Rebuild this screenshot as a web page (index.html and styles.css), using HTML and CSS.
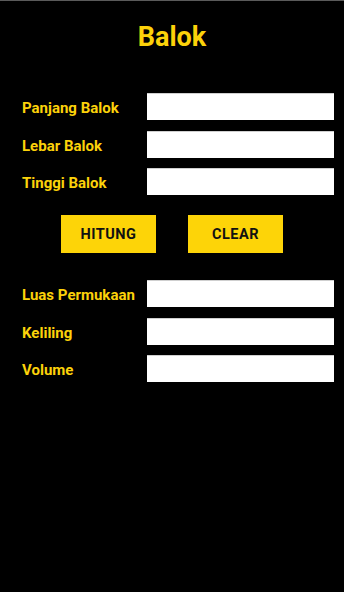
FILE: index.html
```html
<!DOCTYPE html>
<html lang="id">
<head>
<meta charset="utf-8">
<title>Balok</title>
<link rel="stylesheet" href="styles.css">
</head>
<body>
<div class="screen">
  <h1 class="title">Balok</h1>
  <div class="form">
    <label class="label">Panjang Balok</label><input class="field" type="text">
    <label class="label">Lebar Balok</label><input class="field" type="text">
    <label class="label">Tinggi Balok</label><input class="field" type="text">
  </div>
  <div class="actions">
    <button class="btn">HITUNG</button>
    <button class="btn">CLEAR</button>
  </div>
  <div class="form">
    <label class="label">Luas Permukaan</label><input class="field" type="text">
    <label class="label">Keliling</label><input class="field" type="text">
    <label class="label">Volume</label><input class="field" type="text">
  </div>
</div>
</body>
</html>
```
FILE: styles.css
```css
html, body {
  margin: 0;
  padding: 0;
  background: #000;
  height: 100%;
}
.screen {
  border-top: 1px solid #5a5a5a;
  min-height: 100%;
  box-sizing: border-box;
  font-family: Roboto, "Liberation Sans", sans-serif;
  display: flex;
  flex-direction: column;
}
.title {
  margin: 0;
  padding-top: 20px;
  height: 92px;
  box-sizing: border-box;
  font-size: 27px;
  font-weight: 700;
  line-height: 32px;
  text-align: center;
  color: #fcd20a;
}
.form {
  display: grid;
  grid-template-columns: 125px 187px;
  row-gap: 10.5px;
  padding-left: 22px;
  align-items: center;
}
.label {
  color: #fcd20a;
  font-size: 15px;
  font-weight: 700;
  line-height: 16px;
  padding-top: 3px;
}
.field {
  height: 26px;
  margin: 0;
  padding: 0 6px;
  border: 0;
  border-top: 1px solid #cfcfcf;
  background: #fff;
  box-sizing: content-box;
  width: 175px;
  outline: none;
}
.actions {
  display: flex;
  justify-content: center;
  gap: 32px;
  margin: 20px 0 27px;
}
.btn {
  width: 95px;
  height: 38px;
  margin: 0;
  padding: 0;
  border: 0;
  background: #fdd408;
  color: #111;
  font-family: Roboto, "Liberation Sans", sans-serif;
  font-size: 14.5px;
  font-weight: 700;
  letter-spacing: 0.5px;
}
```
